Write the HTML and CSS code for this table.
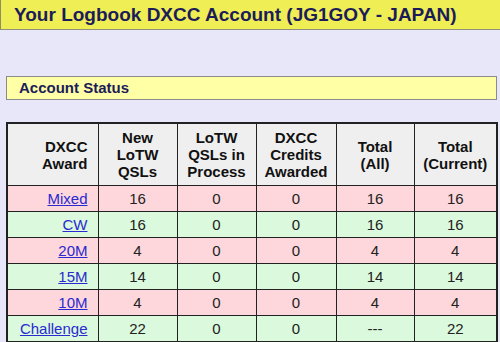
FILE: index.html
```html
<!DOCTYPE html>
<html>
<head>
<meta charset="utf-8">
<link rel="stylesheet" href="styles.css">
</head>
<body>
<div class="title">Your Logbook DXCC Account (JG1GOY - JAPAN)</div>
<div class="status">Account Status</div>
<table class="awards">
  <colgroup>
    <col class="c1"><col class="c2"><col class="c3"><col class="c4"><col class="c5"><col class="c6">
  </colgroup>
  <thead>
    <tr>
      <th class="award">DXCC<br>Award</th>
      <th>New<br>LoTW<br>QSLs</th>
      <th>LoTW<br>QSLs in<br>Process</th>
      <th>DXCC<br>Credits<br>Awarded</th>
      <th>Total<br>(All)</th>
      <th>Total<br>(Current)</th>
    </tr>
  </thead>
  <tbody>
    <tr class="pink"><td class="award"><a href="#">Mixed</a></td><td>16</td><td>0</td><td>0</td><td>16</td><td>16</td></tr>
    <tr class="green"><td class="award"><a href="#">CW</a></td><td>16</td><td>0</td><td>0</td><td>16</td><td>16</td></tr>
    <tr class="pink"><td class="award"><a href="#">20M</a></td><td>4</td><td>0</td><td>0</td><td>4</td><td>4</td></tr>
    <tr class="green"><td class="award"><a href="#">15M</a></td><td>14</td><td>0</td><td>0</td><td>14</td><td>14</td></tr>
    <tr class="pink"><td class="award"><a href="#">10M</a></td><td>4</td><td>0</td><td>0</td><td>4</td><td>4</td></tr>
    <tr class="green"><td class="award"><a href="#">Challenge</a></td><td>22</td><td>0</td><td>0</td><td>---</td><td>22</td></tr>
  </tbody>
</table>
</body>
</html>
```
FILE: styles.css
```css
html, body {
  margin: 0;
  padding: 0;
  background: #e7e7f9;
  overflow: hidden;
}
body {
  font-family: "Liberation Sans", Arial, sans-serif;
  color: #1a1a1a;
}
.title {
  height: 29px;
  background: #efee55;
  border-left: 1px solid #8f8f60;
  border-bottom: 1px solid #8f8f7a;
  padding-left: 13px;
  font-weight: bold;
  font-size: 19px;
  line-height: 29px;
  color: #1c1c5a;
  white-space: nowrap;
}
.status {
  margin: 46px 3px 0 6px;
  height: 22px;
  border: 1px solid #8c8c8c;
  background: #ffffa6;
  padding-left: 12px;
  font-weight: bold;
  font-size: 15px;
  line-height: 22px;
  color: #1c1c5a;
}
.awards {
  margin: 22px 0 0 6px;
  width: 491px;
  table-layout: fixed;
  border-collapse: collapse;
  border: 2px solid #222;
  font-size: 15px;
}
.c1 { width: 91px; }
.c2 { width: 79px; }
.c3 { width: 79px; }
.c4 { width: 80px; }
.c5 { width: 78px; }
.c6 { width: 83px; }
.awards th,
.awards td {
  border: 1px solid #222;
  text-align: center;
  padding: 0 3px;
}
.awards th {
  background: #efefef;
  height: 61px;
  font-weight: bold;
  line-height: 17px;
  color: #111;
}
.awards td {
  height: 25px;
  line-height: 17px;
  color: #222;
}
.awards .award {
  text-align: right;
  padding-right: 10px;
}
.awards a {
  color: #2a2ad0;
  text-decoration: underline;
}
.pink td { background: #fdd7db; }
.green td { background: #dbf9dc; }
```
